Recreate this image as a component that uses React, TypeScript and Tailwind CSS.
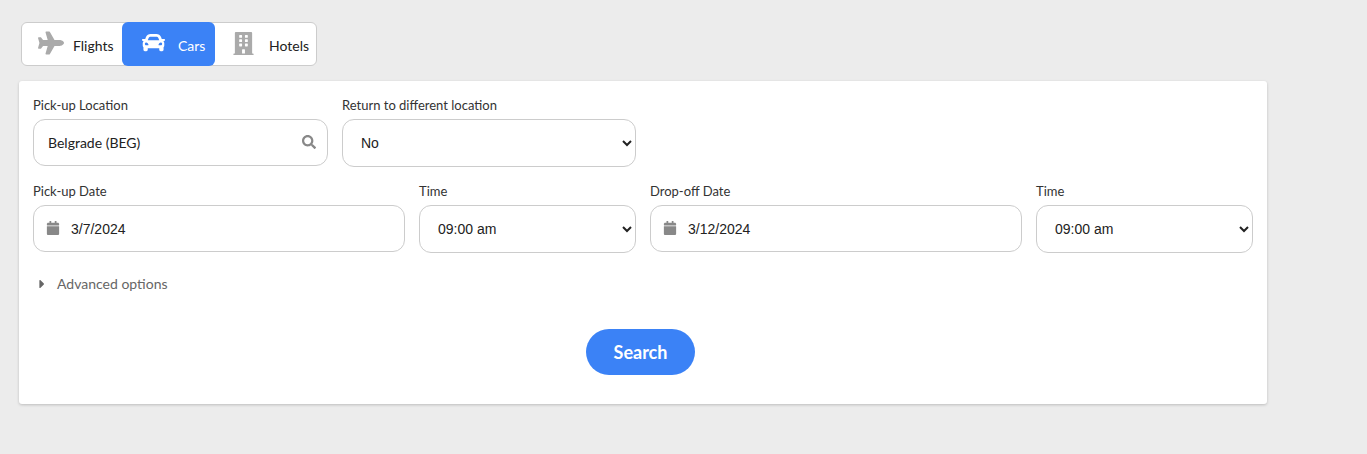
import { FaBuilding, FaCalendar, FaCar, FaCaretRight, FaPlane, FaSearch } from 'react-icons/fa'

function Field(props: { label: string; width: string; children: any }) {
  return (
    <div className={props.width}>
      <label className="block text-[13px] leading-[16px] mb-[6px] text-[#333]">{props.label}</label>
      {props.children}
    </div>
  )
}

function DateInput(props: { value: string }) {
  return (
    <div className="h-[47px] border border-[#ccc] rounded-[12px] bg-white flex items-center pl-[12px]">
      <FaCalendar className="text-[#888] text-[14px] shrink-0 -mt-[1px]" />
      <span className="ml-[11px] mt-[1px] text-[14px] text-[#222] font-['Liberation_Sans',sans-serif]">{props.value}</span>
    </div>
  )
}

function Select(props: { value: string; pad: string }) {
  return (
    <select
      defaultValue={props.value}
      className={'w-full h-[48px] border border-[#ccc] rounded-[12px] bg-white text-[14px] text-[#222] font-[\'Liberation_Sans\',sans-serif] ' + props.pad}
    >
      <option>{props.value}</option>
    </select>
  )
}

export default function App() {
  return (
    <div className="min-h-[454px] bg-[#ececec] pt-[22px] pl-[19px] font-['Lato',sans-serif]">
      <div className="ml-[2px] w-[296px] h-[44px] bg-white border border-[#ccc] rounded-[6px] flex text-[14px] text-[#222]">
        <div className="w-[100px] flex items-center pl-[16px]">
          <FaPlane className="text-[#aaa] text-[26px] -mt-[2px]" />
          <span className="ml-[9px] mt-[3px]">Flights</span>
        </div>
        <div className="w-[93px] -my-px bg-[#3b82f6] rounded-[6px] text-white flex items-center pl-[20px]">
          <FaCar className="text-[23px] -mt-[4px]" />
          <span className="ml-[13px] mt-[3px]">Cars</span>
        </div>
        <div className="flex-1 flex items-center pl-[17px]">
          <FaBuilding className="text-[#aaa] text-[23px] -mt-[2px]" />
          <span className="ml-[14px] mt-[3px]">Hotels</span>
        </div>
      </div>

      <div className="mt-[15px] w-[1248px] h-[323px] bg-white rounded-[3px] shadow-[0_1px_3px_rgba(0,0,0,0.2)] px-[14px] pt-[16px]">
        <div className="flex gap-[14px]">
          <Field label="Pick-up Location" width="w-[295px]">
            <div className="h-[47px] border border-[#ccc] rounded-[12px] bg-white flex items-center justify-between pl-[14px] pr-[11px]">
              <span className="text-[14px] text-[#222]">Belgrade (BEG)</span>
              <FaSearch className="text-[#888] text-[14px] -mt-[1px]" />
            </div>
          </Field>
          <Field label="Return to different location" width="w-[294px]">
            <Select value="No" pad="pl-[14px]" />
          </Field>
        </div>

        <div className="flex gap-[14px] mt-[16px]">
          <Field label="Pick-up Date" width="w-[372px]">
            <DateInput value="3/7/2024" />
          </Field>
          <Field label="Time" width="w-[217px]">
            <Select value="09:00 am" pad="pl-[14px]" />
          </Field>
          <Field label="Drop-off Date" width="w-[372px]">
            <DateInput value="3/12/2024" />
          </Field>
          <Field label="Time" width="w-[217px]">
            <Select value="09:00 am" pad="pl-[14px]" />
          </Field>
        </div>

        <div className="flex items-center mt-[20px] text-[14px] text-[#666]">
          <FaCaretRight className="text-[#666] text-[14px] ml-[2px]" />
          <span className="ml-[8px]">Advanced options</span>
        </div>

        <div className="flex justify-center mt-[35px]">
          <button className="w-[109px] h-[46px] mr-[5px] rounded-full bg-[#3b82f6] text-white text-[18px] font-bold">Search</button>
        </div>
      </div>
    </div>
  )
}
